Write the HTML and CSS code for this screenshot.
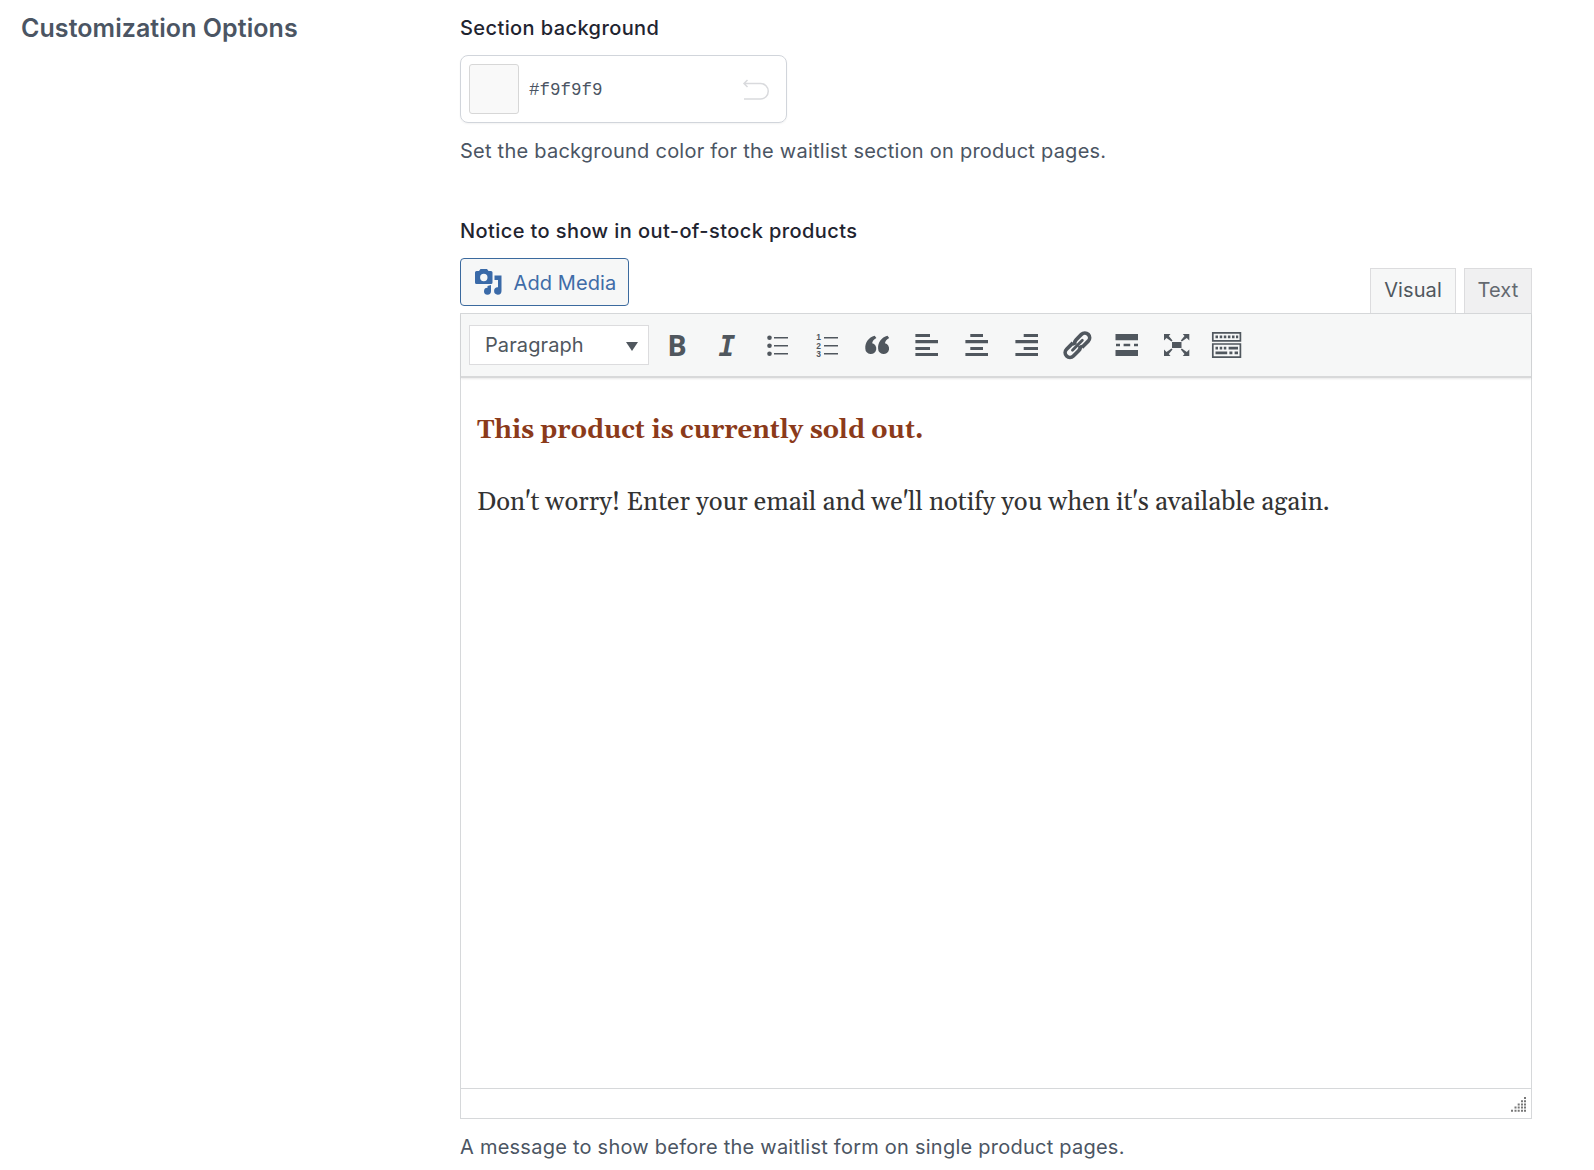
FILE: index.html
```html
<!DOCTYPE html>
<html lang="en">
<head>
<meta charset="utf-8">
<title>Customization Options</title>
<link rel="stylesheet" href="styles.css">
</head>
<body>
<main class="settings">
  <h2 class="settings-title">Customization Options</h2>
  <div class="fields">
    <section class="field">
      <label class="label">Section background</label>
      <div class="color-field">
        <span class="swatch"></span>
        <span class="hex">#f9f9f9</span>
        <svg class="reset" viewBox="0 0 28 24"><path d="M5.500 2 2 5.500 5.500 9M2 5.500H18.500a7.500 7.500 0 0 1 0 15.500H2"/></svg>
      </div>
      <p class="help">Set the background color for the waitlist section on product pages.</p>
    </section>
    <section class="field">
      <label class="label">Notice to show in out-of-stock products</label>
      <div class="editor-tools">
        <button class="add-media">
          <svg class="media-icon" viewBox="0 0 27 26"><path fill-rule="evenodd" d="M1.500 2H4L5.500 0H12L13.500 2H16q1.500 0 1.500 1.500V13.500q0 1.500-1.500 1.500H1.500Q0 15 0 13.500V3.500Q0 2 1.500 2ZM8.800 4.800a3.700 3.700 0 1 0 0 7.400 3.700 3.700 0 0 0 0-7.400Z"/><path d="M19.500 6.500H26.500V22a3.700 3.700 0 1 1-3.500-3.700V11H19.500Z"/><path d="M12.500 17 16 16V22.300a3.500 3.500 0 1 1-3.500-3.600Z"/></svg>
          <span>Add Media</span>
        </button>
        <div class="tabs"><button class="tab active">Visual</button><button class="tab">Text</button></div>
      </div>
      <div class="editor">
        <div class="toolbar">
          <div class="format"><span>Paragraph</span><i class="caret"></i></div>
          <div class="icons">
            <span class="glyph bold">B</span>
            <span class="glyph italic">I</span>
            <svg viewBox="0 0 34 34"><circle cx="9.500" cy="8.700" r="2.300"/><circle cx="9.500" cy="16.700" r="2.300"/><circle cx="9.500" cy="24.700" r="2.300"/><path d="M14 7.900h14v1.700H14zM14 15.900h14v1.700H14zM14 23.900h14v1.700H14z"/></svg>
            <svg viewBox="0 0 34 34"><text x="6.300" y="11.300">1</text><text x="6.300" y="19.500">2</text><text x="6.300" y="27.700">3</text><path d="M14 7.900h14v1.700H14zM14 15.900h14v1.700H14zM14 23.900h14v1.700H14z"/></svg>
            <svg viewBox="0 0 34 34"><path d="M14.700 6.800 16.400 9C13.500 10.800 12.300 12.400 12.200 14.200A5.500 5.500 0 1 1 5.300 19.500C5 13.500 8.500 8.500 14.700 6.800Z"/><path d="M27.500 6.800 29.200 9C26.300 10.800 25.100 12.400 25 14.200A5.500 5.500 0 1 1 18.100 19.500C17.800 13.500 21.300 8.500 27.500 6.800Z"/></svg>
            <svg viewBox="0 0 34 34"><path d="M5.400 5H20v3H5.400zM5.400 11H28v3.200H5.400zM5.400 18H20v3H5.400zM5.400 24H28v3H5.400z"/></svg>
            <svg viewBox="0 0 34 34"><path d="M10.300 5h12.700v3H10.300zM5.400 11H28v3.200H5.400zM10.300 18h12.700v3H10.300zM5.400 24H28v3H5.400z"/></svg>
            <svg viewBox="0 0 34 34"><path d="M13.700 5H28v3H13.700zM5.400 11H28v3.200H5.400zM13.700 18H28v3H13.700zM5.400 24H28v3H5.400z"/></svg>
            <svg viewBox="0 0 34 34"><g transform="translate(17.400 16.200) rotate(-45)" fill="none" stroke="#50575e" stroke-width="3.700"><path d="M-1.500-4.800H-10.500a4.800 4.800 0 0 0 0 9.600H-3a4.800 4.800 0 0 0 4.500-3M1.500 4.800H10.500a4.800 4.800 0 0 0 0-9.600H3a4.800 4.800 0 0 0-4.500 3"/><path stroke-width="2.800" stroke-linecap="round" d="M-7 0H7"/></g></svg>
            <svg viewBox="0 0 34 34"><path d="M5.500 5H28v6.200H5.500zM6 14.700h4v2.500H6zM13.600 14.700h6.600v2.500h-6.600zM24 14.700h4v2.500h-4zM5.500 21H28v6H5.500z"/></svg>
            <svg viewBox="0 0 34 34"><path d="M12 13h9.500v6H12zM4 5h6.500L8.800 7 12.500 11.500 11.500 12.500 6.500 9 4 11.500zM29.300 5h-6.500L24.500 7l-3.700 4.500 1 1 5-3.500 2.500 2.500zM4 27h6.500L8.800 25 12.500 20.500 11.500 19.500l-5 3.500L4 20.500zM29.300 27h-6.500l1.700-2-3.700-4.500 1-1 5 3.500 2.500-2.500z"/></svg>
            <svg viewBox="0 0 34 34"><path fill="none" stroke="#50575e" stroke-width="1.700" d="M2.800 3.900h27.600v8H2.800zM2.800 15h27.600v13.100H2.800z"/><path d="M5.500 6.600H8v2.600H5.500zM9.700 6.600h2.500v2.600H9.700zM13.800 6.600h2.500v2.600h-2.500zM17.900 6.600h2.500v2.600h-2.500zM22 6.600h2.500v2.600H22zM26 6.600h2.200v2.600H26zM5.500 17.800H8v2.700H5.500zM9.700 17.800h2.500v2.700H9.700zM13.800 17.800h2.500v2.700h-2.500zM18.600 17.800h9.400v2.700h-9.400zM5.500 22.600h11.700v2.700H5.500zM19.400 22.600h3v2.700h-3zM24.600 22.600H28v2.700h-3.400z"/></svg>
          </div>
        </div>
        <div class="content">
          <p class="sold"><strong>This product is currently sold out.</strong></p>
          <p class="worry">Don't worry! Enter your email and we'll notify you when it's available again.</p>
        </div>
        <div class="statusbar"><svg viewBox="0 0 16 16"><path d="M13 0h2v2h-2zM10 3.200h2v2h-2zM13 3.200h2v2h-2zM6.700 6.400h2v2h-2zM10 6.400h2v2h-2zM13 6.400h2v2h-2zM3.500 9.600h2v2h-2zM6.700 9.600h2v2h-2zM10 9.600h2v2h-2zM13 9.600h2v2h-2zM0 12.800h2v2H0zM3.500 12.800h2v2h-2zM6.700 12.800h2v2h-2zM10 12.800h2v2h-2zM13 12.800h2v2h-2z"/></svg></div>
      </div>
      <p class="help">A message to show before the waitlist form on single product pages.</p>
    </section>
  </div>
</main>
</body>
</html>
```
FILE: styles.css
```css
* { box-sizing: border-box; }
body { margin: 0; background: #fff; font-family: Inter, sans-serif; font-size: 20px; }
p, h2 { margin: 0; }
button { font: inherit; padding: 0; margin: 0; }
.settings { display: grid; grid-template-columns: 439px 1072px; padding-left: 21px; height: 1170px; }
.settings-title { padding-top: 13px; font-size: 25px; line-height: 30px; font-weight: 570; letter-spacing: .06px; color: #4b5563; }
.label { display: block; height: 30px; line-height: 30px; font-weight: 500; letter-spacing: .41px; color: #1f2430; }
.field:first-child { padding-top: 13px; height: 216px; }
.color-field { display: flex; align-items: center; width: 327px; height: 68px; margin-top: 12px; padding: 0 15px 0 8px; border: 1px solid #d1d5db; border-radius: 8px; box-shadow: 0 1px 2px #0000000d; }
.swatch { width: 50px; height: 50px; background: #f9f9f9; border: 1px solid #d7d7d7; border-radius: 3px; }
.hex { margin-left: 10px; padding-top: 2px; font: 17.5px "Liberation Mono", monospace; color: #4b5563; }
.reset { width: 28px; height: 24px; margin: 1px 1px 0 auto; fill: none; stroke: #d9dadd; stroke-width: 1.5; }
.help { margin-top: 13px; height: 30px; line-height: 30px; letter-spacing: .24px; color: #4b5563; }
.editor-tools { display: flex; justify-content: space-between; align-items: flex-start; height: 67px; padding-top: 12px; }
.add-media { display: flex; align-items: center; width: 169px; height: 48px; padding-left: 14px; gap: 11.5px; background: #f6f7f7; border: 1px solid #3b6a9e; border-radius: 4px; color: #3f6ca8; letter-spacing: .1px; }
.add-media span { padding-top: 2px; }
.media-icon { width: 27px; height: 26px; fill: #3a6aa8; }
.tabs { display: flex; gap: 8px; margin-top: 10px; }
.tab { width: 68px; height: 45px; padding-bottom: 2px; background: #f0f0f1; border: 1px solid #dcdcde; border-bottom: 0; color: #646970; letter-spacing: .1px; }
.tab.active { width: 86px; background: #f6f7f7; color: #50575e; }
.editor { border: 1px solid #d6d8da; }
.toolbar { display: flex; align-items: center; height: 64px; padding-left: 8px; background: #f6f7f7; border-bottom: 2px solid #d8d9da; box-shadow: 0 1px 2px #00000018; }
.format { display: flex; align-items: center; justify-content: space-between; width: 180px; height: 40px; padding: 0 10px 0 15px; background: #fff; border: 1px solid #dcdcde; color: #50575e; letter-spacing: .1px; }
.caret { margin-top: 2px; border: 6px solid transparent; border-top: 9px solid #50575e; border-bottom: 0; }
.icons { display: flex; gap: 16px; margin-left: 11px; padding-top: 2px; }
.icons svg, .glyph { width: 34px; height: 34px; fill: #50575e; color: #50575e; }
.icons text { font: 700 8.5px "Liberation Sans", sans-serif; }
.glyph { text-align: center; }
.bold { font: 700 29px/32px "Open Sans", sans-serif; }
.italic { font: italic 700 28px/35px "DejaVu Sans Mono", monospace; }
.content { height: 710px; padding: 35px 16px 0; font-family: Gelasio, Georgia, "Liberation Serif", serif; font-size: 25.59px; line-height: 36px; color: #333; }
.sold { color: #8b3a1a; }
.worry { margin-top: 36px; }
.statusbar { display: flex; justify-content: flex-end; height: 30px; padding: 8px 4px 0 0; border-top: 1px solid #d6d8da; }
.statusbar svg { width: 16px; height: 16px; fill: #777; }
```
